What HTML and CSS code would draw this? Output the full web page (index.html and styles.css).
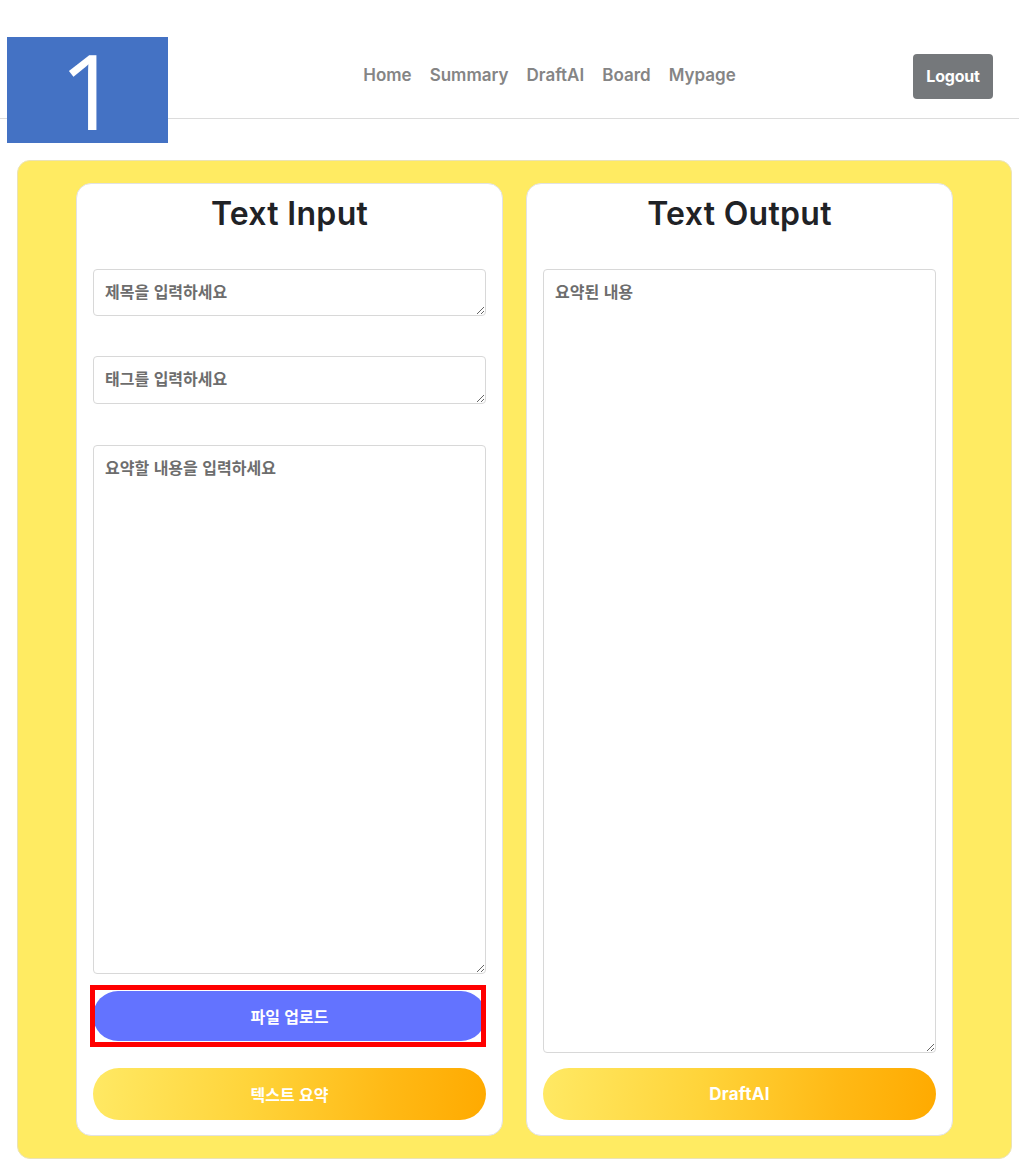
FILE: index.html
```html
<!DOCTYPE html>
<html lang="ko">
<head>
<meta charset="utf-8">
<title>Summary</title>
<link rel="stylesheet" href="styles.css">
</head>
<body>
<div class="badge-num">1</div>
<header class="topbar">
  <nav class="nav">
    <a href="#">Home</a>
    <a href="#">Summary</a>
    <a href="#">DraftAI</a>
    <a href="#">Board</a>
    <a href="#">Mypage</a>
  </nav>
  <button class="logout">Logout</button>
</header>
<main class="board">
  <section class="card">
    <h2 class="card-title">Text Input</h2>
    <textarea class="field field-title" placeholder="제목을 입력하세요"></textarea>
    <textarea class="field field-tag" placeholder="태그를 입력하세요"></textarea>
    <textarea class="field field-body" placeholder="요약할 내용을 입력하세요"></textarea>
    <div class="upload-wrap">
      <button class="btn btn-upload">파일 업로드</button>
      <div class="highlight"></div>
    </div>
    <button class="btn btn-grad btn-summary">텍스트 요약</button>
  </section>
  <section class="card">
    <h2 class="card-title">Text Output</h2>
    <textarea class="field field-out" placeholder="요약된 내용"></textarea>
    <button class="btn btn-grad btn-draft">DraftAI</button>
  </section>
</main>
</body>
</html>
```

FILE: styles.css
```css
* { box-sizing: border-box; }
html, body { margin: 0; padding: 0; background: #fff; }
body { font-family: "Inter", "Noto Sans CJK KR", sans-serif; color: #212529; position: relative; }

.badge-num {
  position: absolute;
  left: 7px;
  top: 37px;
  width: 161px;
  height: 106px;
  background: #4472c4;
  color: #fff;
  font-family: "Open Sans", Roboto, sans-serif;
  font-weight: 400;
  font-size: 105px;
  line-height: 105px;
  text-align: center;
  padding-left: 4px;
  z-index: 5;
}

.topbar {
  height: 119px;
  border-bottom: 1px solid #dcdcdc;
  display: flex;
  align-items: center;
  padding: 32px 26px 0 186px;
}
.nav {
  flex: 1;
  display: flex;
  justify-content: center;
  gap: 18px;
}
.nav a {
  color: #858585;
  text-decoration: none;
  font-size: 17px;
  font-weight: 600;
}
.logout {
  width: 80px;
  height: 45px;
  border: none;
  border-radius: 4px;
  background: #75787b;
  color: #fff;
  font-family: "Inter", sans-serif;
  font-size: 16px;
  font-weight: 700;
  letter-spacing: -0.2px;
  padding-bottom: 3px;
  margin-top: 3px;
}

.board {
  margin: 41px 7px 0 17px;
  height: 999px;
  background: #ffeb62;
  border: 1px solid #ebe3b5;
  border-radius: 13px;
  display: flex;
  justify-content: center;
  gap: 23px;
  padding-top: 22px;
}
.card {
  width: 427px;
  height: 953px;
  background: #fff;
  border: 1px solid #e2e2e2;
  border-radius: 15px;
  padding: 0 16px 0 16px;
  display: flex;
  flex-direction: column;
}
.card-title {
  margin: 12px 0 37px;
  text-align: center;
  font-size: 32px;
  line-height: 36px;
  font-weight: 600;
  letter-spacing: 0.3px;
  color: #1f2226;
}
.field {
  display: block;
  width: 100%;
  border: 1px solid #d8d8d8;
  border-radius: 4px;
  padding: 11px 11px;
  font-family: "Noto Sans CJK KR", "Noto Sans", sans-serif;
  font-size: 16px;
  line-height: 20px;
  font-weight: 700;
  color: #333;
  background: #fff;
}
.field::placeholder { color: #6d6d6d; font-weight: 700; }
.field-title { height: 47px; margin-bottom: 40px; }
.field-tag { height: 48px; margin-bottom: 41px; }
.field-body { height: 529px; margin-bottom: 17px; }
.field-out { height: 784px; margin-bottom: 15px; }

.btn {
  width: 100%;
  border: none;
  color: #fff;
  font-family: "Noto Sans CJK KR", "Inter", sans-serif;
  font-size: 16px;
  font-weight: 700;
}
.upload-wrap { position: relative; margin-bottom: 27px; }
.btn-upload {
  display: block;
  height: 50px;
  border-radius: 25px;
  background: #6373ff;
  padding-bottom: 2px;
}
.highlight {
  position: absolute;
  left: -3px;
  right: 0px;
  top: -6px;
  bottom: -6px;
  border: 5px solid #ff0000;
  pointer-events: none;
}
.btn-grad {
  height: 52px;
  border-radius: 26px;
  background: linear-gradient(95deg, #ffe964 0%, #ffd43a 40%, #ffb915 75%, #ffaa00 100%);
}
.btn-draft {
  font-family: "Inter", sans-serif;
  font-size: 17px;
  font-weight: 700;
  letter-spacing: 0.3px;
}
```
